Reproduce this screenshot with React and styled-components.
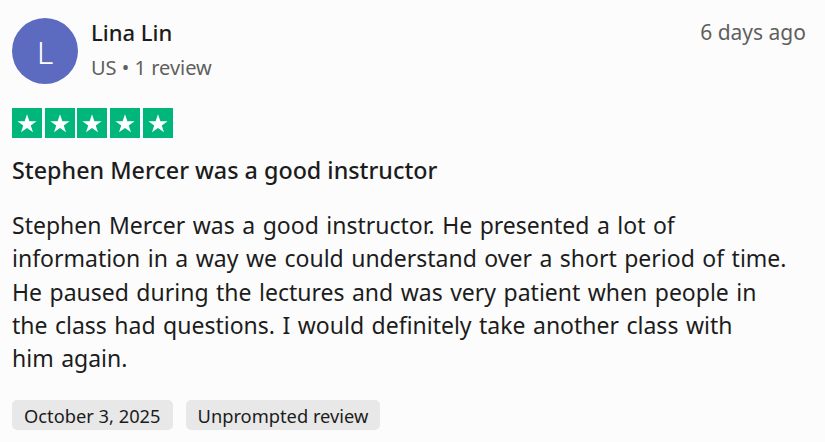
import styled, { createGlobalStyle } from 'styled-components'

const GlobalStyle = createGlobalStyle`
  html, body {
    margin: 0;
    padding: 0;
    background: #fcfcfc;
  }
  body {
    font-family: 'Noto Sans', 'Open Sans', sans-serif;
    color: #1a1a1a;
  }
`

const Card = styled.div`
  width: 825px;
  height: 442px;
  box-sizing: border-box;
  padding: 18px 19px 0 12px;
  display: flex;
  flex-direction: column;
`

const Header = styled.div`
  display: flex;
  align-items: flex-start;
`

const Avatar = styled.div`
  width: 66px;
  height: 66px;
  border-radius: 50%;
  background: #5c6bc0;
  color: #fff;
  font-size: 32px;
  font-weight: 300;
  display: flex;
  align-items: center;
  justify-content: center;
  flex-shrink: 0;
`

const Who = styled.div`
  margin-left: 13px;
  display: flex;
  flex-direction: column;
  flex: 1;
`

const Name = styled.div`
  font-size: 22px;
  font-weight: 500;
  line-height: 28px;
  color: #1c1c1c;
`

const Meta = styled.div`
  font-size: 20px;
  line-height: 26px;
  color: #5f5f5f;
  margin-top: 9px;
`

const Ago = styled.div`
  font-size: 21px;
  line-height: 28px;
  color: #5f5f5f;
`

const Stars = styled.div`
  display: flex;
  gap: 2.7px;
  margin-top: 24px;
`

const StarBox = styled.div`
  width: 30px;
  height: 30px;
  background: #00b67a;
  display: flex;
  align-items: center;
  justify-content: center;
`

const Title = styled.h2`
  margin: 17px 0 0;
  font-size: 23.3px;
  font-weight: 500;
  line-height: 30px;
  color: #1c1c1c;
`

const Body = styled.p`
  margin: 24px 0 0;
  font-size: 23px;
  line-height: 33.3px;
  word-spacing: 1.5px;
  color: #1c1c1c;
  white-space: nowrap;
`

const Tags = styled.div`
  display: flex;
  gap: 13px;
  margin-top: 25px;
`

const Tag = styled.span`
  background: #e8e8e8;
  border-radius: 5px;
  padding: 0 12px;
  height: 30px;
  display: flex;
  align-items: center;
  font-size: 18.3px;
  color: #1c1c1c;
`

const lines = [
  'Stephen Mercer was a good instructor. He presented a lot of',
  'information in a way we could understand over a short period of time.',
  'He paused during the lectures and was very patient when people in',
  'the class had questions. I would definitely take another class with',
  'him again.',
]

function Star() {
  return (
    <svg width="20" height="20" viewBox="0 0 24 24">
      <path
        fill="#fff"
        d="M12 1.5l2.9 8.3h8.6l-7 5.1 2.7 8.3L12 18.1l-7.2 5.1 2.7-8.3-7-5.1h8.6z"
      />
    </svg>
  )
}

export default function App() {
  return (
    <>
      <GlobalStyle />
      <Card>
        <Header>
          <Avatar>L</Avatar>
          <Who>
            <Name>Lina Lin</Name>
            <Meta>US • 1 review</Meta>
          </Who>
          <Ago>6 days ago</Ago>
        </Header>
        <Stars>
          {[0, 1, 2, 3, 4].map((i) => (
            <StarBox key={i}>
              <Star />
            </StarBox>
          ))}
        </Stars>
        <Title>Stephen Mercer was a good instructor</Title>
        <Body>
          {lines.map((line, i) => (
            <span key={i}>
              {line}
              {i < lines.length - 1 && <br />}
            </span>
          ))}
        </Body>
        <Tags>
          <Tag>October 3, 2025</Tag>
          <Tag>Unprompted review</Tag>
        </Tags>
      </Card>
    </>
  )
}
